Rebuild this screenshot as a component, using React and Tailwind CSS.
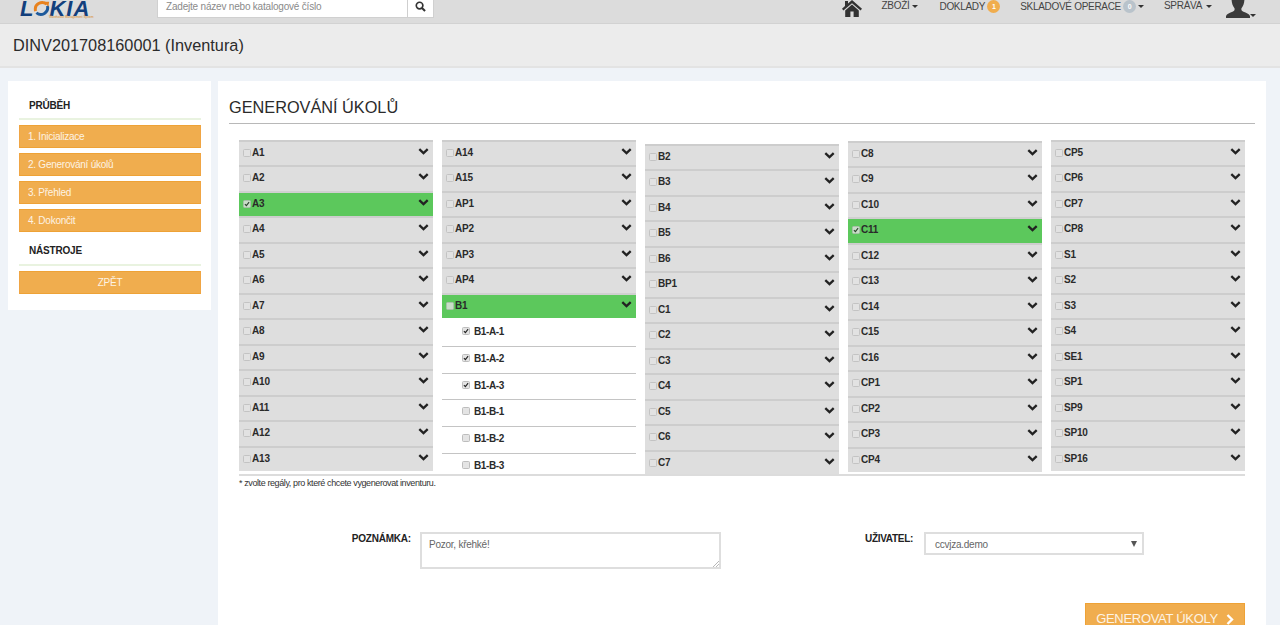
const FONT = 'font-["Liberation_Sans",Arial,sans-serif]';

const COLUMNS = [
  { offset: 'mt-[-0.2px]', rows: ['A1', 'A2', 'A3', 'A4', 'A5', 'A6', 'A7', 'A8', 'A9', 'A10', 'A11', 'A12', 'A13'] },
  { offset: 'mt-[-0.2px]', rows: ['A14', 'A15', 'AP1', 'AP2', 'AP3', 'AP4', 'B1'] },
  { offset: 'mt-[3.8px]', rows: ['B2', 'B3', 'B4', 'B5', 'B6', 'BP1', 'C1', 'C2', 'C3', 'C4', 'C5', 'C6', 'C7'] },
  { offset: 'mt-[0.8px]', rows: ['C8', 'C9', 'C10', 'C11', 'C12', 'C13', 'C14', 'C15', 'C16', 'CP1', 'CP2', 'CP3', 'CP4'] },
  { offset: 'mt-[-0.2px]', rows: ['CP5', 'CP6', 'CP7', 'CP8', 'S1', 'S2', 'S3', 'S4', 'SE1', 'SP1', 'SP9', 'SP10', 'SP16'] },
];

const GREEN = ['A3', 'B1', 'C11'];
const CHECKED = ['A3', 'C11'];

const B1_ITEMS = [
  { name: 'B1-A-1', checked: true },
  { name: 'B1-A-2', checked: true },
  { name: 'B1-A-3', checked: true },
  { name: 'B1-B-1', checked: false },
  { name: 'B1-B-2', checked: false },
  { name: 'B1-B-3', checked: false },
];

const STEPS = ['1. Inicializace', '2. Generování úkolů', '3. Přehled', '4. Dokončit'];

function Caret({ className = '' }) {
  return <span className={`inline-block w-0 h-0 border-x-[3px] border-x-transparent border-t-[3px] border-t-[#333] ${className}`} />;
}

function Check({ checked, className = '' }) {
  return (
    <span className={`w-[8px] h-[8px] rounded-[1.5px] border border-[#bdbdbd] bg-[#e4e4e4] flex items-center justify-center shrink-0 ${className}`}>
      {checked && (
        <svg viewBox="0 0 8 8" className="w-[8px] h-[8px]">
          <path d="M1.2 4.2 L3.2 6.2 L6.8 1.6" fill="none" stroke="#222" strokeWidth="1.5" />
        </svg>
      )}
    </span>
  );
}

function Chevron() {
  return (
    <svg viewBox="0 0 11 7" className="ml-auto mt-[6px] w-[11px] h-[7px] shrink-0">
      <path d="M1.3 1.2 L5.5 5.2 L9.7 1.2" fill="none" stroke="#222" strokeWidth="2.3" />
    </svg>
  );
}

function Logo() {
  return (
    <div className="relative w-[70px] h-[24px] ml-[20px] shrink-0">
      <div className="absolute left-0 top-0 flex items-center text-[22px] leading-[16px] font-bold italic text-[#123f7c] tracking-[1px]">
        <span>L</span>
        <svg viewBox="0 0 20 20" className="w-[17px] h-[17px] -mx-[1px]">
          <path d="M16 5 A8 8 0 0 0 3 13" fill="none" stroke="#e8821e" strokeWidth="3.4" />
          <path d="M4 15 A8 8 0 0 0 17 7" fill="none" stroke="#1d5a9c" strokeWidth="3.4" />
          <path d="M13 2 L19 2 L18 8 Z" fill="#e8821e" />
        </svg>
        <span>KIA</span>
      </div>
      <div className="absolute left-[29px] top-[16px] text-[3px] leading-[3px] whitespace-nowrap text-[#d98a22]">Warehouse Management System</div>
    </div>
  );
}

function HomeIcon() {
  return (
    <svg viewBox="0 0 20 17" className="w-[20px] h-[17px] fill-[#333]">
      <path d="M10 0 L20 8.8 L18.6 10.4 L10 3.2 L1.4 10.4 L0 8.8 L3 6 L3 1 L6 1 L6 3.4 Z" />
      <path d="M3.2 10.4 L10 4.6 L16.8 10.4 L16.8 17 L11.6 17 L11.6 11.5 L8.4 11.5 L8.4 17 L3.2 17 Z" />
    </svg>
  );
}

function UserIcon() {
  return (
    <svg viewBox="0 0 24 18" className="w-[24px] h-[18px] fill-[#3a3a3a]">
      <path d="M5.5 -2 L18.5 -2 C18.5 2 17.5 6 15.5 8.2 C15 10 15.8 11 17.5 11.8 C20 13 23.2 13.8 24 16 L24 18 L0 18 L0 16 C0.8 13.8 4 13 6.5 11.8 C8.2 11 9 10 8.5 8.2 C6.5 6 5.5 2 5.5 -2 Z" />
    </svg>
  );
}

function Navbar() {
  return (
    <header className="h-[24px] bg-[#dcdcdc] border-b border-[#d2d2d2] flex items-start overflow-hidden">
      <Logo />
      <div className="flex ml-[67px] -mt-[6px] h-[24px] bg-white border border-[#d0d0d0] w-[277px]">
        <div className="w-[250px] px-[8px] text-[10px] tracking-[-0.2px] leading-[24px] text-[#8a8a8a]">Zadejte název nebo katalogové číslo</div>
        <div className="w-[26px] border-l border-[#cfcfcf] flex items-center justify-center">
          <svg viewBox="0 0 12 12" className="w-[11px] h-[11px]">
            <circle cx="5" cy="5" r="3.6" fill="none" stroke="#333" strokeWidth="1.8" />
            <path d="M7.6 7.6 L11 11" stroke="#333" strokeWidth="2.2" />
          </svg>
        </div>
      </div>
      <nav className="ml-auto flex items-start h-[23px] text-[10px] tracking-[-0.3px] leading-[12px] text-[#444]">
        <HomeIcon />
        <div className="ml-[20px] flex items-center"><span>ZBOŽÍ</span><Caret className="ml-[3px]" /></div>
        <div className="ml-[21px] flex items-center">
          <span>DOKLADY</span>
          <span className="ml-[2px] w-[13px] h-[13px] rounded-full bg-[#f0ad4e] text-white text-[7px] font-bold flex items-center justify-center">1</span>
        </div>
        <div className="ml-[20px] flex items-center">
          <span>SKLADOVÉ OPERACE</span>
          <span className="ml-[2px] w-[13px] h-[13px] rounded-full bg-[#b9c3cb] text-white text-[7px] font-bold flex items-center justify-center">0</span>
          <Caret className="ml-[2px]" />
        </div>
        <div className="ml-[20px] flex items-center"><span>SPRÁVA</span><Caret className="ml-[4px]" /></div>
        <div className="ml-[14px] mr-[24px] relative w-[30px] h-[23px]">
          <UserIcon />
          <Caret className="absolute right-0 top-[14px]" />
        </div>
      </nav>
    </header>
  );
}

function OrangeButton({ children }) {
  return (
    <div className="h-[23px] bg-[#f0ad4e] border border-[#eea236] border-x-[#f0a544] px-[8px] text-[10px] tracking-[-0.25px] leading-[21px] text-[#fdf3e4]">
      {children}
    </div>
  );
}

function Sidebar() {
  return (
    <aside className="w-[203px] h-[229px] bg-white pl-[11px] pr-[10px] shrink-0">
      <div className="h-[39px] pt-[18px] pl-[10px] border-b-2 border-[#e9f3e0] text-[10px] tracking-[-0.2px] leading-[14px] font-bold text-[#222]">PRŮBĚH</div>
      <div className="mt-[5px] flex flex-col gap-[5px]">
        {STEPS.map(s => <OrangeButton key={s}>{s}</OrangeButton>)}
      </div>
      <div className="h-[34px] pt-[12px] pl-[10px] border-b-2 border-[#e9f3e0] text-[10px] tracking-[-0.2px] leading-[14px] font-bold text-[#222]">NÁSTROJE</div>
      <div className="mt-[5px]">
        <OrangeButton><div className="text-center">ZPĚT</div></OrangeButton>
      </div>
    </aside>
  );
}

function RackRow({ name }) {
  const green = GREEN.includes(name);
  return (
    <div className={`h-[25.5px] border-t-2 px-[4px] flex items-start ${green ? 'bg-[#5cc85c] border-[#d0d0d0]' : 'bg-[#dedede] border-[#cdcdcd]'}`}>
      <Check checked={CHECKED.includes(name)} className="mt-[7px] opacity-80" />
      <span className="ml-[1px] mt-[4px] text-[10px] tracking-[-0.2px] leading-[14px] font-bold text-[#2a2a2a]">{name}</span>
      <Chevron />
    </div>
  );
}

function RackItem({ name, checked, last }) {
  return (
    <div className={`h-[26.7px] bg-white pl-[20px] flex items-start ${last ? '' : 'border-b border-[#c4c4c4]'}`}>
      <Check checked={checked} className="mt-[7px]" />
      <span className="ml-[4px] mt-[5px] text-[10px] tracking-[-0.4px] leading-[14px] font-bold text-[#2a2a2a]">{name}</span>
    </div>
  );
}

function RackGrid() {
  return (
    <div className="mt-[16px] mx-[10px] h-[336px] overflow-hidden border-b-2 border-[#dcdcdc] flex gap-[9px]">
      {COLUMNS.map((col, i) => (
        <div key={i} className={`w-[194px] shrink-0 ${col.offset}`}>
          {col.rows.map(r => <RackRow key={r} name={r} />)}
          {i === 1 && (
            <div className="pt-[2px]">
              {B1_ITEMS.map((it, idx) => (
                <RackItem key={it.name} name={it.name} checked={it.checked} last={idx === B1_ITEMS.length - 1} />
              ))}
            </div>
          )}
        </div>
      ))}
    </div>
  );
}

export default function App() {
  return (
    <div className={`h-[625px] overflow-hidden bg-[#eff3f8] ${FONT}`}>
      <Navbar />
      <div className="h-[44px] bg-[#ececec] border-b-2 border-[#e3e3e3] pl-[13px] pt-[11px] text-[16.3px] leading-[20px] text-[#2b2b2b]">
        DINV201708160001 (Inventura)
      </div>
      <div className="flex items-start gap-[7px] pl-[8px] pr-[14px] pt-[13px]">
        <Sidebar />
        <main className="flex-1 h-[544px] bg-white px-[11px] overflow-hidden">
          <h1 className="h-[43px] pt-[16px] border-b border-[#b8b8b8] text-[16.3px] leading-[20px] text-[#2b2b2b]">GENEROVÁNÍ ÚKOLŮ</h1>
          <RackGrid />
          <p className="ml-[10px] mt-[1px] text-[9px] tracking-[-0.4px] leading-[12px] text-[#333]">* zvolte regály, pro které chcete vygenerovat inventuru.</p>
          <div className="mt-[43px] flex items-start">
            <label className="w-[182px] text-right mt-[1px] text-[10px] tracking-[-0.2px] leading-[12px] font-bold text-[#222]">POZNÁMKA:</label>
            <div className="ml-[9px] w-[301px] h-[37px] border-2 border-[#dedede] px-[7px] pt-[4px] text-[10px] tracking-[-0.25px] leading-[14px] text-[#666] relative">
              Pozor, křehké!
              <svg viewBox="0 0 6 6" className="absolute right-0 bottom-0 w-[6px] h-[6px] stroke-[#999]">
                <path d="M0 6 L6 0 M3 6 L6 3" fill="none" strokeWidth="0.7" />
              </svg>
            </div>
            <label className="ml-[144px] w-[48px] mt-[1px] text-[10px] tracking-[-0.3px] leading-[12px] font-bold text-[#222] whitespace-nowrap">UŽIVATEL:</label>
            <div className="ml-[11px] w-[220px] h-[23px] border-2 border-[#dedede] pl-[9px] pr-[5px] pt-[1px] flex items-center justify-between text-[10px] tracking-[-0.25px] text-[#666]">
              <span>ccvjza.demo</span>
              <span className="w-0 h-0 border-x-[3px] border-x-transparent border-t-[6px] border-t-[#555]" />
            </div>
          </div>
          <div className="flex justify-end mr-[10px] mt-[34px]">
            <div className="w-[160px] h-[30px] bg-[#f0ad4e] border border-[#eea236] flex items-start justify-center gap-[8px] pt-[7px] text-[13px] tracking-[-0.3px] leading-[16px] text-[#fdf3e4]">
              <span>GENEROVAT ÚKOLY</span>
              <svg viewBox="0 0 8 11" className="w-[8px] h-[11px] mt-[3px] shrink-0">
                <path d="M1.5 1 L6 5.5 L1.5 10" fill="none" stroke="#fff" strokeWidth="2.4" />
              </svg>
            </div>
          </div>
        </main>
      </div>
    </div>
  );
}
